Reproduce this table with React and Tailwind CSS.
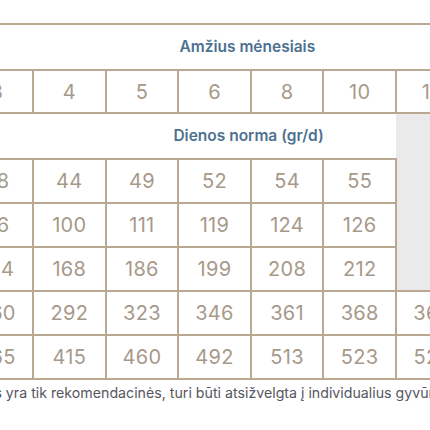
import React from "react";

const months = ["3", "4", "5", "6", "8", "10", "12", "14"];
const rows = [
  ["38", "44", "49", "52", "54", "55"],
  ["86", "100", "111", "119", "124", "126"],
  ["144", "168", "186", "199", "208", "212"],
  ["260", "292", "323", "346", "361", "368", "368", "368"],
  ["365", "415", "460", "492", "513", "523", "523", "523"],
];

const cell =
  "border-2 border-[#b8a990] text-center align-middle text-[20px] tracking-[0.3px] text-[#a6998a] p-0";

export default function App() {
  return (
    <div
      className="w-[430px] h-[430px] overflow-hidden bg-white relative"
      style={{ fontFamily: "Inter, 'Open Sans', sans-serif" }}
    >
      <div className="pt-[23px] ml-[-40.6px]">
        <table className="table-fixed border-collapse w-[581px]">
          <colgroup>
            {months.map((m) => (
              <col key={m} className="w-[72.6px]" />
            ))}
          </colgroup>
          <tbody>
            <tr className="h-[46px]">
              <td
                colSpan={8}
                className="border-y-2 border-[#b8a990] text-center align-middle text-[15.5px] font-semibold text-[#4d7190] pr-[7px]"
              >
                Amžius ménesiais
              </td>
            </tr>
            <tr className="h-[43px]">
              {months.map((m) => (
                <td key={m} className={cell}>
                  {m}
                </td>
              ))}
            </tr>
            <tr className="h-[46px]">
              <td
                colSpan={6}
                className="border-t-2 border-b-2 border-l-2 border-r-0 border-[#b8a990] text-left align-middle text-[15.5px] font-semibold text-[#4d7190] pl-[212px] whitespace-nowrap"
              >
                Dienos norma (gr/d)
              </td>
              <td
                colSpan={2}
                rowSpan={4}
                className="border-t-2 border-b-2 border-r-2 border-l-0 border-[#b8a990] bg-[#eaeaeb] text-center align-middle text-[20px] text-[#a6998a] whitespace-nowrap"
              >
                (žr. kt.)
              </td>
            </tr>
            {rows.map((r, i) => (
              <tr key={i} className="h-[44px]">
                {r.map((v, j) => (
                  <td key={j} className={cell}>
                    {v}
                  </td>
                ))}
              </tr>
            ))}
          </tbody>
        </table>
      </div>
      <p className="mt-[2px] ml-[-49px] whitespace-nowrap text-[14.2px] text-[#55565f]">
        normos yra tik rekomendacinės, turi būti atsižvelgta į individualius gyvūnų poreikius.
      </p>
    </div>
  );
}
